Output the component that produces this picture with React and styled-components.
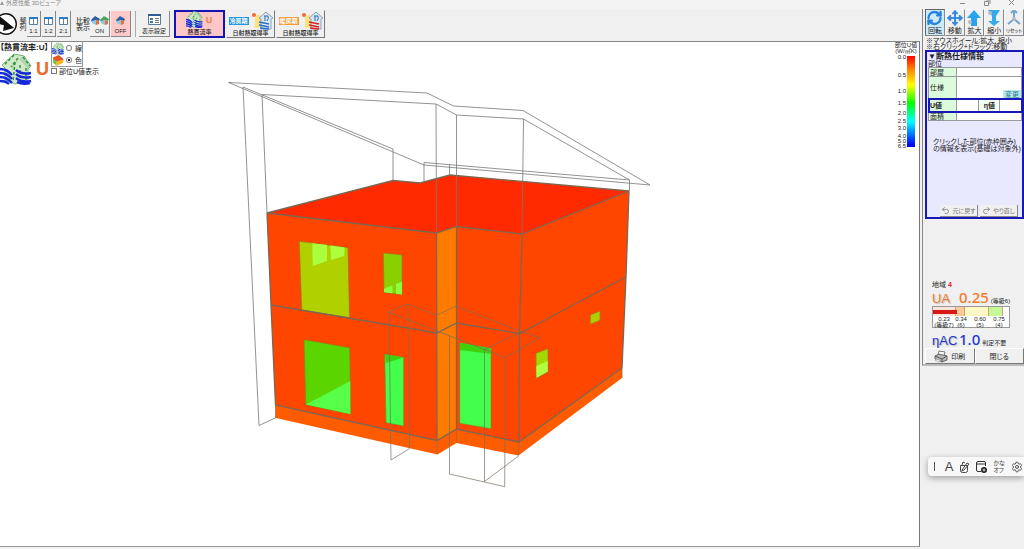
import React, { useState } from 'react';
import styled, { createGlobalStyle } from 'styled-components';
import { Move, RefreshCw, Settings, Undo2, Redo2 } from 'lucide-react';

const ticks = [
  { label: '0.0', h: 18 },
  { label: '0.5', h: 16 },
  { label: '1.0', h: 12 },
  { label: '1.5', h: 10 },
  { label: '2.0', h: 8 },
  { label: '2.5', h: 7 },
  { label: '3.0', h: 8 },
  { label: '4.0', h: 5 },
  { label: '5.0', h: 5 },
  { label: '6.5', h: 6 },
];

const grades = [
  { value: '0.23', name: '(等級7)', w: 23, color: '#fbe3dc' },
  { value: '0.34', name: '(6)', w: 9, color: '#fbc896' },
  { value: '0.60', name: '(5)', w: 24, color: '#fff8c4' },
  { value: '0.75', name: '(4)', w: 14, color: '#c6f898' },
];

const HouseIcon = ({ size }) => (
  <svg width={size} height={size} viewBox="0 0 32 32" aria-hidden="true">
    <path d="M2 12L14 1l10 2 7 10-3 3v12l-13 3-10-4V15z" fill="#d3e8c8" stroke="#7fae82" strokeWidth="1" />
    <path d="M12 12L23 3l7 10-2 3-9-10-7 11z" fill="#b4d6ae" />
    <path d="M14 2L4 12M18 5l-7 9M23 4l7 9M15 9l-2 20M20 12v17M26 15v12" fill="none" stroke="#2b963a" strokeWidth="1.5" strokeDasharray="3 2" />
    <path d="M0 16q7 0 12 6M0 20q7 0 12 6M0 24q7 0 12 6M0 28q6 0 9 3M16 17q6 5 15 3M16 21q6 5 15 3M16 25q6 5 15 3M17 29q6 3 13 1" fill="none" stroke="#1428dc" strokeWidth="2.4" />
  </svg>
);

const ColorHouseIcon = () => (
  <svg width="13" height="12" viewBox="0 0 13 12" aria-hidden="true">
    <path d="M1 4l4 3v5L1 9z" fill="#76c043" />
    <path d="M5 7l7-2v4l-7 3z" fill="#f7b51a" />
    <path d="M1 4l6-3 5 4-7 2z" fill="#f04e1c" stroke="#a33" strokeWidth=".5" />
  </svg>
);

const SmallHouse = ({ roof }) => (
  <svg width="9" height="9" viewBox="0 0 9 9" aria-hidden="true">
    <path d="M0 4l4-4 5 3-1 2-3-1-4 2z" fill={roof} />
    <path d="M1 5l4-1v5L1 7z" fill="#8fc7e8" />
    <path d="M5 4l3 1v3L5 9z" fill="#e2733b" />
  </svg>
);

const SplitIcon = () => (
  <svg width="9" height="8" viewBox="0 0 9 8" aria-hidden="true">
    <path d="M.5.5h8v7h-8zM4.5 2v6" fill="#fff" stroke="#60809a" />
    <path d="M0 0h9v2H0z" fill="#2b7cc4" />
  </svg>
);

const SunIcon = ({ beam }) => (
  <svg width="22" height="18" viewBox="0 0 22 18" aria-hidden="true">
    <circle cx="3" cy="3" r="2" fill="#f36a32" />
    <path d="M4 5l5-3 3 13-8 1z" fill="#ffe27a" />
    <path d="M8 6l7-6 7 6-2 1v10H10V7z" fill="#dbe7f0" stroke="#8ba1b5" />
    <path d="M13 4h4M14 4v5M17 4q1 3-1 5" fill="none" stroke="#2869b4" />
    <path d="M8 10l10 2M8 13l10 2M9 16l9 1" stroke={beam} strokeWidth="1.6" />
  </svg>
);

const Printer = () => (
  <svg width="14" height="13" viewBox="0 0 14 13" aria-hidden="true">
    <path d="M5 1l6 1-1 4-6-1z" fill="#fff" stroke="#777" />
    <path d="M1 6l4-2 8 2v4l-5 2-7-3z" fill="#b8b8b8" stroke="#666" />
    <path d="M1 6l7 3v3M8 9l5-3" fill="none" stroke="#555" />
    <path d="M3 9l4 2-2 1-4-2z" fill="#fff" stroke="#888" strokeWidth=".6" />
  </svg>
);

const Model = () => (
  <Drawing viewBox="0 42 919 504" preserveAspectRatio="xMinYMin meet" role="img" aria-label="3D">
    {/* faces */}
    <path d="M267 213L393 180.500 420 183 450 175 629 191 522 234 456.500 226.500 436.500 233z" fill="#ff2a00" />
    <path d="M267 213L436.500 233 437 440.500 275.500 405 271 305z" fill="#ff4600" />
    <path d="M456.500 226.500L522 234 519.500 333 519 442 456.500 429z" fill="#ff4600" />
    <path d="M522 234L629 191 626 277 622 368 519 442 519.500 333z" fill="#ff4600" />
    <path d="M436.500 233L456.500 226.500V429L437 440.500z" fill="#ff7b00" />
    <path d="M275.500 405L437 440.500 456.500 429 519 442 622 368V378L518.500 455.500 456.500 443 437.500 454.500 276 418z" fill="#ff5c00" />

    {/* openings */}
    <g stroke="#8a7a20" strokeWidth=".6">
      <path d="M299.300 241.300L348 247.700 349.500 317.700 301.700 310z" fill="#b0d000" />
      <path d="M383.300 253L402 255V294.700L384 292.300z" fill="#8ad000" />
      <path d="M304 339.700L349.700 347.700 350.700 414.300 305.700 404.700z" fill="#5bd500" />
      <path d="M384.700 354.300L403.700 357.300V426L386 422.700z" fill="#43ff4c" />
      <path d="M459.700 342.700L491 348.300V428.700L459.700 423.300z" fill="#43ff4c" />
      <path d="M536 353.300L548 348.700V371.700L536.300 378.300z" fill="#a4d800" />
      <path d="M590.300 315L600 311V320.300L590.300 324.300z" fill="#b4cc00" />
    </g>
    <path d="M312.300 243.300L327 245V261L312.700 266zM330.300 245.500L344.700 247.500 344.300 256 331 260z" fill="#acff3f" />
    <path d="M384 288.700L392.500 285.500V293.300L384 292.300zM396 284L402 281.700V294.500L396 293.800z" fill="#8cff3f" />
    <path d="M306 404.500L350.300 381V414z" fill="#57ff48" />
    <path d="M385 354.600L403.500 357.500 386 363z" fill="#3fd20c" />
    <path d="M460 343L490.700 348.600V354L460 350z" fill="#3fd20c" />
    <path d="M536.300 366L547.700 361V371.400L536.500 377.800z" fill="#b0ff40" />

    {/* wall and floor edges */}
    <path
      d="M267 213L393 180.500 420 183 450 175 629 191 522 234 456.500 226.500 436.500 233zM267 213L271 305 275.500 405 437 440.500 456.500 429 519 442 622 368 626 277 629 191M271 305L437 333 456.500 323 519.500 333.500 626 277M522 234L519.500 333 519 442M436.500 233L437 440.500M456.500 226.500V429"
      fill="none"
      stroke="#7d6550"
      strokeWidth="1.3"
    />
    <path d="M437.200 440V454M456.500 429V443M518.800 442V455M275.500 405V418M622 368V378" stroke="#9a6a40" strokeWidth=".8" />

    {/* roof outline */}
    <path
      d="M228.500 82.500L427 93 453.500 106 523 110.500 650 185 424 165zM243 87L393 149 M243 87L259 425.500 276 417.500M267 213L262 94.500 436 104 456.500 115 523.500 119 629.500 180 424 162.500V182M393 149V181M449.500 164.500V175M436 104L436.500 233M456.500 115V227M523.500 119L522 234M629.500 180V191"
      fill="none"
      stroke="#777"
      strokeWidth=".8"
    />
    {/* porch outline */}
    <path
      d="M388 312L407.500 304 437 315 456.500 306 517 330 540 338 505.500 357.500zM389 312L391 460 409.500 448.500 408 304M449.500 336V474L504.700 486.700 505.500 357.500M484.500 349.500V481.500L519 455.700M484.500 349.500L519.500 333"
      fill="none"
      stroke="#776d60"
      strokeWidth=".7"
    />
  </Drawing>
);

const App = () => {
  const [drawMode, setDrawMode] = useState('color');
  const [showValue, setShowValue] = useState(false);

  return (
    <>
      <GlobalStyle />
      <Window>
        <TitleBar>
          <TitleText>
            <svg width="6" height="7" viewBox="0 0 6 7" aria-hidden="true"><path d="M0 5l2-4 2 4z" fill="#999" /></svg>
            外皮性能 3Dビューア
          </TitleText>
          <WindowControls>
            <svg width="60" height="9" viewBox="0 0 60 9" fill="none" stroke="#888" aria-hidden="true">
              <path d="M1 3.500h5M25.500 1.500h4v4h-4zM27 0h4v4M50 0l5 5M55 0l-5 5" />
            </svg>
          </WindowControls>
        </TitleBar>

        <Body>
          <Viewer>
            <Toolbar>
              <Compass viewBox="0 0 17 24" aria-hidden="true">
                <circle cx="6" cy="12" r="10.300" fill="#fff" stroke="#111" strokeWidth="1.400" />
                <path d="M-1 4L14 16-1 12z" fill="#111" />
                <path d="M-1 4L14 16 3 19 4 13z" fill="#111" />
              </Compass>
              <VerticalText>整列</VerticalText>
              <ToolGroup>
                <ToolButton $w={14}><SplitIcon />1:1</ToolButton>
                <ToolButton $w={14}><SplitIcon />1:2</ToolButton>
                <ToolButton $w={14}><SplitIcon />2:1</ToolButton>
              </ToolGroup>
              <CompareText>比較<br />表示</CompareText>
              <ToolGroup>
                <ToolButton $w={20}>
                  <IconPair><SmallHouse roof="#2d5f9e" /><SmallHouse roof="#45a55a" /></IconPair>
                  ON
                </ToolButton>
                <ToolButton $w={20} $active><SmallHouse roof="#2d5f9e" />OFF</ToolButton>
              </ToolGroup>
              <Divider />
              <ToolButton $w={31}>
                <svg width="13" height="11" viewBox="0 0 13 11" aria-hidden="true">
                  <path d="M.5.5h12v10H.5z" fill="#fff" stroke="#5b7c99" />
                  <path d="M0 0h13v2H0z" fill="#2d5f8e" />
                  <path d="M2 4h3v2H2zM2 7h3v2H2z" fill="#45759e" />
                  <path d="M7 4.500h4M7 6.500h4M7 8.500h4" stroke="#777" />
                </svg>
                表示設定
              </ToolButton>
              <ModeGroup>
                <ModeButton $active>
                  <ModeIcons><HouseIcon size={17} /><ModeU>U</ModeU></ModeIcons>
                  熱貫流率
                </ModeButton>
                <ModeButton>
                  <ModeIcons><Season $color="#2494dc">冷房期</Season><SunIcon beam="#2b6fd0" /></ModeIcons>
                  日射熱取得率
                </ModeButton>
                <ModeButton>
                  <ModeIcons><Season $color="#f39a3c">暖房期</Season><SunIcon beam="#e02020" /></ModeIcons>
                  日射熱取得率
                </ModeButton>
              </ModeGroup>
            </Toolbar>

            <Canvas>
              <Model />
              <Overlay>
                <OverlayLeft>
                  <ModeTitle>【熱貫流率:U】</ModeTitle>
                  <BigIcons><HouseIcon size={32} /><BigU>U</BigU></BigIcons>
                </OverlayLeft>
                <OverlayRight>
                  <RadioBox>
                    <RadioRow>
                      <HouseIcon size={13} />
                      <Radio name="draw" checked={drawMode === 'line'} onChange={() => setDrawMode('line')} />
                      線
                    </RadioRow>
                    <RadioRow>
                      <ColorHouseIcon />
                      <Radio name="draw" checked={drawMode === 'color'} onChange={() => setDrawMode('color')} />
                      色
                    </RadioRow>
                  </RadioBox>
                  <CheckRow>
                    <Check checked={showValue} onChange={() => setShowValue(!showValue)} />
                    部位U値表示
                  </CheckRow>
                </OverlayRight>
              </Overlay>
              <Legend>
                <LegendTitle>部位U値<br />(W/㎡K)</LegendTitle>
                <LegendBody>
                  <Ticks>
                    {ticks.map((t) => <Tick key={t.label} $h={t.h}>{t.label}</Tick>)}
                  </Ticks>
                  <Gradient />
                </LegendBody>
              </Legend>
            </Canvas>
          </Viewer>

          <Side>
            <Panel>
              <ViewButtons>
                <ViewButton $active><RefreshCw size={17} color="#2783dc" strokeWidth={3.5} />回転</ViewButton>
                <ViewButton><Move size={16} color="#3a8bdc" strokeWidth={3} />移動</ViewButton>
                <ViewButton>
                  <svg width="16" height="16" viewBox="0 0 16 16" aria-hidden="true"><path d="M8 0l7 8h-4v8H5V8H1z" fill="#29a3ee" /><circle cx="4" cy="12" r="2" fill="#b5bcc4" /></svg>
                  拡大
                </ViewButton>
                <ViewButton>
                  <svg width="16" height="16" viewBox="0 0 16 16" aria-hidden="true"><path d="M2 0h12l-4 6v5h4l-6 5-6-5h4V6z" fill="#35a9ee" /><circle cx="4" cy="3" r="2" fill="#b5bcc4" /></svg>
                  縮小
                </ViewButton>
                <ViewButton $small>
                  <svg width="16" height="16" viewBox="0 0 16 16" fill="none" stroke="#78a4d0" strokeWidth="2" aria-hidden="true"><path d="M8 1v8l-6 5M8 9l6 5M5 3l3-3 3 3" /><circle cx="8" cy="9" r="2" fill="#b5bcc4" stroke="none" /></svg>
                  リセット
                </ViewButton>
              </ViewButtons>
              <Note>※マウスホイール:拡大, 縮小<br />※右クリック+ドラッグ:移動</Note>

              <InfoPanel>
                <InfoTitle>▼断熱仕様情報</InfoTitle>
                <InfoLabel>部位</InfoLabel>
                <InfoTable>
                  <tbody>
                    <InfoRow $h={9}><th scope="row">部屋</th><td colSpan="3"></td></InfoRow>
                    <InfoRow $h={22}>
                      <th scope="row">仕様</th>
                      <td colSpan="3"><ChangeButton>変更</ChangeButton></td>
                    </InfoRow>
                    <ValueRow $h={13}>
                      <th scope="row">U値</th><td></td><th scope="row">η値</th><td></td>
                    </ValueRow>
                    <InfoRow $h={9}><th scope="row">面積</th><td colSpan="3"></td></InfoRow>
                  </tbody>
                </InfoTable>
                <Hint>クリックした部位(赤枠囲み)<br />の情報を表示(基礎は対象外)</Hint>
                <HistoryButtons>
                  <HistoryButton disabled><Undo2 size={9} />元に戻す</HistoryButton>
                  <HistoryButton disabled><Redo2 size={9} />やり直し</HistoryButton>
                </HistoryButtons>
              </InfoPanel>

              <Result>
                <Region>地域 <b>4</b></Region>
                <Score $color="#f07a2c"><ScoreName>UA</ScoreName><ScoreValue>0.25</ScoreValue><small>(等級6)</small></Score>
                <GradeBox>
                  <GradeBar>
                    {grades.map((g) => <Grade key={g.value} $w={g.w} $color={g.color} />)}
                    <CurrentBar />
                  </GradeBar>
                  <GradeLabels>
                    {grades.map((g) => <span key={g.value}>{g.value}<br />{g.name}</span>)}
                  </GradeLabels>
                </GradeBox>
                <Score $color="#2437d6"><ScoreName>ηAC</ScoreName><ScoreValue>1.0</ScoreValue><small>判定不要</small></Score>
              </Result>
              <BottomButtons>
                <BottomButton><Printer />印刷</BottomButton>
                <BottomButton>閉じる</BottomButton>
              </BottomButtons>
            </Panel>
          </Side>
        </Body>

        <ImeBar>
          <ImeCaret />
          <span>A</span>
          <svg width="11" height="12" viewBox="0 0 11 12" fill="none" stroke="#444" aria-hidden="true">
            <path d="M1.500 4.500v5q0 2 2 2h3q2 0 2-2v-5zM3 9l5-7 2 1-5 6-2 1zM3 4l1-3 2 1" />
          </svg>
          <svg width="11" height="12" viewBox="0 0 11 12" fill="none" stroke="#333" aria-hidden="true">
            <path d="M5 10.500H2q-1.500 0-1.500-1.500V2Q.5.500 2 .500h6q1.500 0 1.500 1.500v3M0 3h10" />
            <circle cx="8" cy="9" r="3" fill="#222" stroke="none" />
            <path d="M6.500 9h3M8 7.500v3" stroke="#fff" strokeWidth=".8" />
          </svg>
          <ImeMode>かな<br />オフ</ImeMode>
          <Settings size={12} color="#555" strokeWidth={2} />
        </ImeBar>
      </Window>
    </>
  );
};

const GlobalStyle = createGlobalStyle`
  * {
    box-sizing: border-box;
  }

  body {
    margin: 0;
    overflow: hidden;
    background: #f0f0f0;
  }

  body, button, input {
    font-family: "Liberation Sans", "Noto Sans CJK JP", sans-serif;
    font-feature-settings: "palt";
    color: #222;
  }

  button {
    padding: 0;
    white-space: nowrap;
    cursor: pointer;
  }
`;

const Window = styled.div`
  position: relative;
  display: flex;
  flex-direction: column;
  height: 100vh;
  background: #f0f0f0;
`;

const TitleBar = styled.header`
  display: flex;
  justify-content: space-between;
  height: 9px;
  background: #f3f3f3;
`;

const TitleText = styled.div`
  display: flex;
  color: #888;
  font-size: 6px;
  line-height: 7px;
`;

const WindowControls = styled.div`
  height: 9px;
  padding-right: 5px;

  svg {
    display: block;
  }
`;

const Body = styled.div`
  flex: 1;
  min-height: 0;
  display: flex;
`;

const Viewer = styled.main`
  flex: 1;
  min-width: 0;
  display: flex;
  flex-direction: column;
  padding-bottom: 2px;
`;

const Toolbar = styled.div`
  display: flex;
  align-items: center;
  height: 32px;
  padding-bottom: 2px;
`;

const Compass = styled.svg`
  width: 17px;
  height: 24px;
`;

const VerticalText = styled.span`
  width: 10px;
  writing-mode: vertical-rl;
  font-size: 7px;
  line-height: 10px;
`;

const ToolGroup = styled.div`
  display: flex;
  gap: 1px;
`;

const ToolButton = styled.button`
  display: flex;
  flex-direction: column;
  align-items: center;
  justify-content: flex-end;
  gap: 2px;
  width: ${(props) => props.$w}px;
  height: 26px;
  padding-bottom: 1px;
  font-size: 6px;
  line-height: 8px;
  background: ${(props) => (props.$active ? '#ffc9c9' : '#f0f0f0')};
  border: none;
  border-right: 1px solid #888;
  border-bottom: 1px solid #888;
`;

const IconPair = styled.span`
  display: flex;
`;

const CompareText = styled.span`
  width: 19px;
  padding-left: 5px;
  font-size: 7px;
  line-height: 7px;
`;

const Divider = styled.div`
  width: 1px;
  height: 26px;
  margin: 0 3px 0 4px;
  background: #aaa;
`;

const ModeGroup = styled.div`
  display: flex;
  gap: 1px;
  margin-left: 4px;
`;

const ModeButton = styled.button`
  display: flex;
  flex-direction: column;
  align-items: center;
  justify-content: flex-end;
  width: ${(props) => (props.$active ? 51 : 49)}px;
  height: 28px;
  font-size: 6px;
  font-weight: 500;
  line-height: 8px;
  background: ${(props) => (props.$active ? '#ffc6c8' : '#f0f0f0')};
  border: ${(props) => (props.$active ? '2px solid #1414b4' : '1px solid #f0f0f0')};
  border-right-color: ${(props) => (props.$active ? '#1414b4' : '#777')};
  border-bottom-color: ${(props) => (props.$active ? '#1414b4' : '#777')};
`;

const ModeIcons = styled.span`
  display: flex;
  align-items: center;
  gap: 2px;
  height: 17px;
`;

const ModeU = styled.b`
  width: 8px;
  color: #e8804c;
  font-size: 9px;
`;

const Season = styled.span`
  width: 20px;
  color: #fff;
  font-size: 6px;
  font-weight: 700;
  line-height: 8px;
  background: ${(props) => props.$color};
`;

const Canvas = styled.section`
  position: relative;
  flex: 1;
  min-height: 0;
  background: #fff;
  border-top: 1px solid #888;
  border-right: 1px solid #777;
  border-bottom: 1px solid #999;
`;

const Drawing = styled.svg`
  display: block;
  width: 100%;
  height: 100%;
`;

const Overlay = styled.div`
  position: absolute;
  top: 0;
  left: 0;
  display: flex;
`;

const OverlayLeft = styled.div`
  width: 51px;
`;

const ModeTitle = styled.h1`
  margin: 0;
  font-size: 8px;
  line-height: 11px;
  white-space: nowrap;
`;

const BigIcons = styled.div`
  display: flex;
  align-items: center;
  gap: 4px;
`;

const BigU = styled.b`
  color: #ec6a2c;
  font-size: 18px;
  line-height: 20px;
`;

const OverlayRight = styled.div`
  font-size: 7px;
`;

const RadioBox = styled.div`
  width: 32px;
  border: 1px solid #999;
  border-top: none;
`;

const RadioRow = styled.label`
  display: flex;
  align-items: center;
  gap: 1px;
  height: 12px;
`;

const Radio = styled.input.attrs({ type: 'radio' })`
  appearance: none;
  width: 6px;
  height: 6px;
  margin: 0 2px 0 1px;
  background: ${(props) => (props.checked ? 'radial-gradient(#222 35%, #fff 45%)' : '#fff')};
  border: 1px solid #888;
  border-radius: 50%;
`;

const CheckRow = styled.label`
  display: flex;
  align-items: center;
  gap: 2px;
  height: 8px;
  white-space: nowrap;
`;

const Check = styled.input.attrs({ type: 'checkbox' })`
  appearance: none;
  width: 6px;
  height: 6px;
  margin: 0;
  background: ${(props) => (props.checked ? '#444' : '#fff')};
  border: 1px solid #777;
`;

const Legend = styled.aside`
  position: absolute;
  top: 0;
  right: 1px;
  width: 24px;
`;

const LegendTitle = styled.div`
  height: 12px;
  font-size: 6px;
  line-height: 6px;
  text-align: center;
  white-space: nowrap;
`;

const LegendBody = styled.div`
  display: flex;
  justify-content: flex-end;
  gap: 1px;
  padding-right: 3px;
`;

const Ticks = styled.div`
  font-size: 6px;
  line-height: 6px;
`;

const Tick = styled.div`
  height: ${(props) => props.$h}px;
`;

const Gradient = styled.div`
  width: 8px;
  height: 91px;
  margin-top: 2px;
  background: linear-gradient(#f00, #ff8000 14%, #ff0 32%, #0f0 52%, #0ff 72%, #00f 98%);
`;

const Side = styled.aside`
  width: 104px;
  padding-left: 2px;
`;

const Panel = styled.div`
  padding-left: 2px;
  border-left: 1px solid #888;
  border-bottom: 2px solid #bbb;
`;

const ViewButtons = styled.div`
  display: grid;
  grid-template-columns: repeat(5, minmax(0, 1fr));
`;

const ViewButton = styled.button`
  display: flex;
  flex-direction: column;
  align-items: center;
  justify-content: flex-end;
  height: 27px;
  font-size: ${(props) => (props.$small ? 5 : 7)}px;
  line-height: 9px;
  background: ${(props) => (props.$active ? '#cdeafa' : '#f0f0f0')};
  border: 1px solid ${(props) => (props.$active ? '#666' : '#f8f8f8')};
  border-right-color: #888;
  border-bottom-color: #888;
`;

const Note = styled.p`
  margin: 0;
  height: 14px;
  padding: 2px 0 0 1px;
  font-size: 7px;
  line-height: 6px;
  white-space: nowrap;
`;

const InfoPanel = styled.section`
  display: flex;
  flex-direction: column;
  height: 169px;
  padding: 0 0 0 1px;
  background: #e8e8ff;
  border: 2px solid #1818b8;
`;

const InfoTitle = styled.h2`
  margin: 0;
  font-size: 8px;
  line-height: 9px;
`;

const InfoLabel = styled.div`
  font-size: 7px;
  line-height: 6px;
`;

const InfoTable = styled.table`
  width: 100%;
  border-collapse: collapse;
  table-layout: fixed;
  font-size: 7px;
  line-height: 7px;

  th, td {
    padding: 0;
    border: 1px solid #999;
  }

  th {
    width: 28px;
    padding-left: 1px;
    font-weight: 400;
    text-align: left;
    background: #dcfadc;
  }

  td {
    text-align: right;
    vertical-align: bottom;
    background: #fff;
  }
`;

const InfoRow = styled.tr`
  height: ${(props) => props.$h}px;
`;

const ValueRow = styled(InfoRow)`
  outline: 2px solid #1818b8;
  outline-offset: -1px;

  th {
    font-weight: 700;
  }

  th + td + th {
    text-align: center;
    background: #f2fff2;
  }
`;

const ChangeButton = styled.button`
  width: 18px;
  height: 8px;
  color: #27808c;
  font-size: 7px;
  line-height: 7px;
  background: #b8e8ee;
  border: none;
`;

const Hint = styled.p`
  margin: 17px 0 0 5px;
  font-size: 7px;
  line-height: 7px;
  white-space: nowrap;
`;

const HistoryButtons = styled.div`
  display: flex;
  gap: 2px;
  margin-top: auto;
  padding-left: 12px;
`;

const HistoryButton = styled.button`
  display: flex;
  align-items: center;
  justify-content: center;
  gap: 2px;
  width: 38px;
  height: 12px;
  color: #777;
  font-size: 6px;
  line-height: 8px;
  background: #f0f0f0;
  border: none;
  border-right: 1px solid #888;
  border-bottom: 1px solid #888;
`;

const Result = styled.section`
  width: 90px;
  margin-top: 61px;
  padding-left: 7px;
`;

const Region = styled.div`
  font-size: 7px;
  line-height: 9px;

  b {
    color: #e01818;
  }
`;

const Score = styled.div`
  display: flex;
  align-items: baseline;
  height: 17px;
  color: ${(props) => props.$color};
  white-space: nowrap;

  small {
    color: #222;
    font-size: 6px;
  }
`;

const ScoreName = styled.span`
  width: 27px;
  font-size: 13px;
  line-height: 17px;
  text-shadow: 1px 1px 1px #bbb;
`;

const ScoreValue = styled.b`
  margin-right: 2px;
  font-family: "Noto Sans", sans-serif;
  font-size: 15px;
  font-weight: 500;
  line-height: 17px;
`;

const GradeBox = styled.div`
  width: 78px;
  height: 22px;
  margin-bottom: 3px;
  background: #fff;
  border: 1px solid #999;
`;

const GradeBar = styled.div`
  position: relative;
  display: flex;
  height: 9px;
`;

const Grade = styled.div`
  width: ${(props) => props.$w}px;
  background: ${(props) => props.$color};
  border-right: 1px solid #c8a870;
`;

const CurrentBar = styled.div`
  position: absolute;
  top: 3px;
  left: 0;
  width: 24px;
  height: 4px;
  background: #d81818;
`;

const GradeLabels = styled.div`
  display: grid;
  grid-template-columns: 20px 14px 24px 14px;
  padding-left: 1px;
  font-size: 6px;
  line-height: 6px;
  text-align: center;
  white-space: nowrap;
`;

const BottomButtons = styled.div`
  display: grid;
  grid-template-columns: 1fr 1fr;
`;

const BottomButton = styled.button`
  display: flex;
  align-items: center;
  justify-content: center;
  gap: 3px;
  height: 16px;
  font-size: 7px;
  background: #f0f0f0;
  border: 1px solid #fff;
  border-right-color: #777;
  border-bottom-color: #777;
`;

const ImeBar = styled.div`
  position: absolute;
  right: 0;
  bottom: 73px;
  display: flex;
  align-items: center;
  gap: 6px;
  height: 19px;
  padding: 0 1px 0 6px;
  color: #444;
  font-size: 13px;
  background: #f8f8f8;
  border-radius: 4px 0 0 4px;
  box-shadow: 0 2px 6px rgba(0, 0, 0, 0.35);
`;

const ImeCaret = styled.i`
  width: 1px;
  height: 9px;
  margin-right: 4px;
  background: #555;
`;

const ImeMode = styled.span`
  font-size: 6px;
  line-height: 7px;
`;

export default App;
